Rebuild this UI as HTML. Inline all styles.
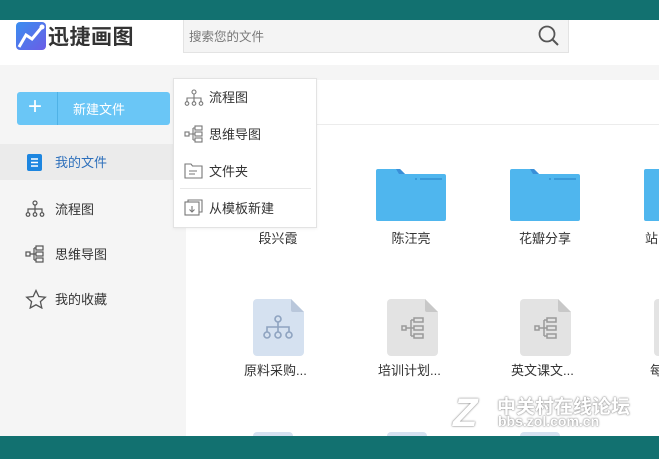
<!DOCTYPE html>
<html><head><meta charset="utf-8"><style>
*{margin:0;padding:0;box-sizing:border-box}
html{width:659px;height:459px;overflow:hidden}
body{width:659px;height:459px;overflow:hidden;position:relative;background:#fff;font-family:"Liberation Sans","Noto Sans CJK SC",sans-serif;color:#333}
.a{position:absolute}
.t{font-size:13px;white-space:nowrap;margin-top:-2px}
</style></head><body>
<div class="a" style="left:0;top:0;width:659px;height:20px;background:#127170"></div>
<svg class="a" style="left:16px;top:22px" width="30" height="28" viewBox="0 0 30 28">
<defs><linearGradient id="g" x1="0" y1="0" x2="1" y2="1"><stop offset="0" stop-color="#3a8ef0"/><stop offset="1" stop-color="#6b5ce6"/></linearGradient></defs>
<rect width="30" height="28" rx="4" fill="url(#g)"/>
<path d="M3 25 L10 13 L16 17 L26 5" stroke="#fff" stroke-width="3" fill="none"/><circle cx="26" cy="5" r="2.5" fill="#fff"/></svg>
<div class="a" style="left:48px;top:21px;font-size:21px;color:#333;font-weight:bold;letter-spacing:0.5px">迅捷画图</div>
<div class="a" style="left:183px;top:20px;width:386px;height:33px;background:#f4f4f4;border:1px solid #e3e3e3;border-top:none"></div>
<div class="a t" style="left:189px;top:28px;color:#777;font-size:12.5px">搜索您的文件</div>
<svg class="a" style="left:537px;top:25px" width="24" height="22" viewBox="0 0 24 22"><circle cx="10" cy="9" r="7.5" stroke="#555" stroke-width="1.8" fill="none"/><path d="M15.5 14.5 L21 20" stroke="#555" stroke-width="2"/></svg>
<div class="a" style="left:0;top:65px;width:659px;height:15px;background:#f5f5f5"></div>
<div class="a" style="left:0;top:65px;width:186px;height:372px;background:#f5f5f5"></div>
<div class="a" style="left:186px;top:124px;width:473px;height:1px;background:#ececec"></div>
<div class="a" style="left:17px;top:92px;width:153px;height:33px;background:#6ac6f6;border-radius:3px"></div>
<div class="a" style="left:57px;top:92px;width:1px;height:33px;background:#4fb2e6"></div>
<div class="a" style="left:28px;top:92px;color:#fff;font-size:24px;line-height:30px">+</div>
<div class="a t" style="left:73px;top:101px;color:#fff">新建文件</div>
<div class="a" style="left:0;top:144px;width:186px;height:36px;background:#ebebeb"></div>
<svg class="a" style="left:27px;top:154px" width="15" height="17" viewBox="0 0 15 17"><rect width="15" height="17" rx="2" fill="#1d86e0"/><path d="M4 5h7M4 8.5h7M4 12h7" stroke="#fff" stroke-width="1.5"/></svg>
<div class="a t" style="left:55px;top:154px;color:#2d6fbb">我的文件</div>
<svg class="a" style="left:25px;top:200px" width="20" height="17" viewBox="0 0 20 17" fill="none" stroke="#555" stroke-width="1.2"><circle cx="10" cy="3" r="2"/><path d="M10 5v4M3 13V9h14v4M10 9v4"/><circle cx="3" cy="14.5" r="1.8"/><circle cx="10" cy="14.5" r="1.8"/><circle cx="17" cy="14.5" r="1.8"/></svg>
<div class="a t" style="left:55px;top:201px">流程图</div>
<svg class="a" style="left:25px;top:245px" width="20" height="18" viewBox="0 0 20 18" fill="none" stroke="#555" stroke-width="1.2"><rect x="1" y="7" width="4" height="4"/><path d="M5 9h4M9 3v12M9 3h2M9 9h2M9 15h2"/><rect x="11" y="1" width="7" height="4"/><rect x="11" y="7" width="7" height="4"/><rect x="11" y="13" width="7" height="4"/></svg>
<div class="a t" style="left:55px;top:246px">思维导图</div>
<svg class="a" style="left:25px;top:289px" width="22" height="20" viewBox="0 0 22 20"><path d="M11 1.5l2.8 6 6.5.7-4.9 4.4 1.4 6.4L11 15.8 5.2 19l1.4-6.4L1.7 8.2l6.5-.7z" fill="none" stroke="#555" stroke-width="1.3"/></svg>
<div class="a t" style="left:55px;top:291px">我的收藏</div>

<svg width="0" height="0" style="position:absolute"><defs>
<g id="fd"><path d="M2 0h22l5 5h39a2 2 0 0 1 2 2v43a2 2 0 0 1-2 2H2a2 2 0 0 1-2-2V2a2 2 0 0 1 2-2z" fill="#4fb6ee"/><path d="M24 0l5 5h-6l-3-5z" fill="#3a8fd8"/><rect x="44" y="9" width="22" height="2" fill="#3a9ad9"/><rect x="39" y="9" width="2" height="2" fill="#3a9ad9"/></g>
<g id="mm" fill="none" stroke="#999" stroke-width="1.5"><rect x="-10" y="-2" width="4" height="4"/><path d="M-6 0h5M-1-8v16M-1-8h3M-1 0h3M-1 8h3"/><rect x="2" y="-10" width="9" height="4"/><rect x="2" y="-2" width="9" height="4"/><rect x="2" y="6" width="9" height="4"/></g>
</defs></svg>
<svg class="a" style="left:376px;top:169px" width="70" height="52"><use href="#fd"/></svg>
<svg class="a" style="left:510px;top:169px" width="70" height="52"><use href="#fd"/></svg>
<svg class="a" style="left:644px;top:169px" width="15" height="52"><use href="#fd"/></svg>
<div class="a t" style="left:248px;top:230px;width:60px;text-align:center">段兴霞</div>
<div class="a t" style="left:381px;top:230px;width:60px;text-align:center">陈汪亮</div>
<div class="a t" style="left:505px;top:230px;width:80px;text-align:center">花瓣分享</div>
<div class="a t" style="left:645px;top:230px">站</div>

<svg class="a" style="left:253px;top:299px" width="51" height="57"><path d="M4 0h34l13 13v40a4 4 0 0 1-4 4H4a4 4 0 0 1-4-4V4a4 4 0 0 1 4-4z" fill="#d5e1f0"/><path d="M38 0l13 13H40a2 2 0 0 1-2-2z" fill="#b9c7db"/>
<g fill="none" stroke="#8ea3c0" stroke-width="1.6"><circle cx="25" cy="20" r="3"/><path d="M25 23v4M14 33v-5h22v5M25 27v6"/><circle cx="14" cy="36" r="3"/><circle cx="25" cy="36" r="3"/><circle cx="36" cy="36" r="3"/></g></svg>
<svg class="a" style="left:387px;top:299px" width="51" height="57"><path d="M4 0h34l13 13v40a4 4 0 0 1-4 4H4a4 4 0 0 1-4-4V4a4 4 0 0 1 4-4z" fill="#e3e3e3"/><path d="M38 0l13 13H40a2 2 0 0 1-2-2z" fill="#c8c8c8"/><use href="#mm" transform="translate(25,29)"/></svg>
<svg class="a" style="left:520px;top:299px" width="51" height="57"><path d="M4 0h34l13 13v40a4 4 0 0 1-4 4H4a4 4 0 0 1-4-4V4a4 4 0 0 1 4-4z" fill="#e3e3e3"/><path d="M38 0l13 13H40a2 2 0 0 1-2-2z" fill="#c8c8c8"/><use href="#mm" transform="translate(25,29)"/></svg>
<div class="a" style="left:654px;top:299px;width:5px;height:57px;background:#e3e3e3;border-radius:4px 0 0 4px"></div>
<div class="a t" style="left:244px;top:362px">原料采购...</div>
<div class="a t" style="left:378px;top:362px">培训计划...</div>
<div class="a t" style="left:511px;top:362px">英文课文...</div>
<div class="a t" style="left:650px;top:362px">每</div>
<div class="a" style="left:253px;top:432px;width:40px;height:6px;background:#d5e1f0;border-radius:4px 4px 0 0"></div>
<div class="a" style="left:387px;top:432px;width:40px;height:6px;background:#d5e1f0;border-radius:4px 4px 0 0"></div>
<div class="a" style="left:520px;top:432px;width:40px;height:6px;background:#d5e1f0;border-radius:4px 4px 0 0"></div>

<div class="a" style="left:173px;top:78px;width:144px;height:150px;background:#fff;border:1px solid #e3e3e3;box-shadow:0 1px 3px rgba(0,0,0,.06)"></div>
<svg class="a" style="left:184px;top:89px" width="20" height="17" viewBox="0 0 20 17" fill="none" stroke="#777" stroke-width="1.1"><circle cx="10" cy="3" r="2"/><path d="M10 5v4M3 13V9h14v4M10 9v4"/><circle cx="3" cy="14.5" r="1.8"/><circle cx="10" cy="14.5" r="1.8"/><circle cx="17" cy="14.5" r="1.8"/></svg>
<div class="a t" style="left:209px;top:89px">流程图</div>
<svg class="a" style="left:184px;top:125px" width="20" height="18" viewBox="0 0 20 18" fill="none" stroke="#777" stroke-width="1.1"><rect x="1" y="7" width="4" height="4"/><path d="M5 9h4M9 3v12M9 3h2M9 9h2M9 15h2"/><rect x="11" y="1" width="7" height="4"/><rect x="11" y="7" width="7" height="4"/><rect x="11" y="13" width="7" height="4"/></svg>
<div class="a t" style="left:209px;top:126px">思维导图</div>
<svg class="a" style="left:184px;top:163px" width="19" height="16" viewBox="0 0 19 16" fill="none" stroke="#777" stroke-width="1.1"><path d="M1 1h6l1.5 2H18v12H1z"/><path d="M5 8h8M5 11h6"/></svg>
<div class="a t" style="left:209px;top:163px">文件夹</div>
<div class="a" style="left:180px;top:188px;width:131px;height:1px;background:#e8e8e8"></div>
<svg class="a" style="left:184px;top:199px" width="19" height="17" viewBox="0 0 19 17" fill="none" stroke="#777" stroke-width="1.1"><rect x="1" y="3" width="14" height="13"/><path d="M4 3V1h14v12h-3M8 7v6M5.5 10.5L8 13l2.5-2.5"/></svg>
<div class="a t" style="left:209px;top:200px">从模板新建</div>

<div class="a" style="left:453px;top:391px;font-size:40px;font-weight:bold;font-style:italic;color:#fff;text-shadow:0 0 2px #888,0 0 1px #888">Z</div>
<div class="a" style="left:497px;top:392px;font-size:19px;font-weight:bold;color:#fff;text-shadow:0 0 2px #888,0 0 1px #888;white-space:nowrap">中关村在线论坛</div>
<div class="a" style="left:498px;top:413px;font-size:14px;font-weight:bold;color:#fff;text-shadow:0 0 2px #888,0 0 1px #888">bbs.zol.com.cn</div>

<div class="a" style="left:0;top:436px;width:659px;height:23px;background:#127170"></div>
</body></html>
